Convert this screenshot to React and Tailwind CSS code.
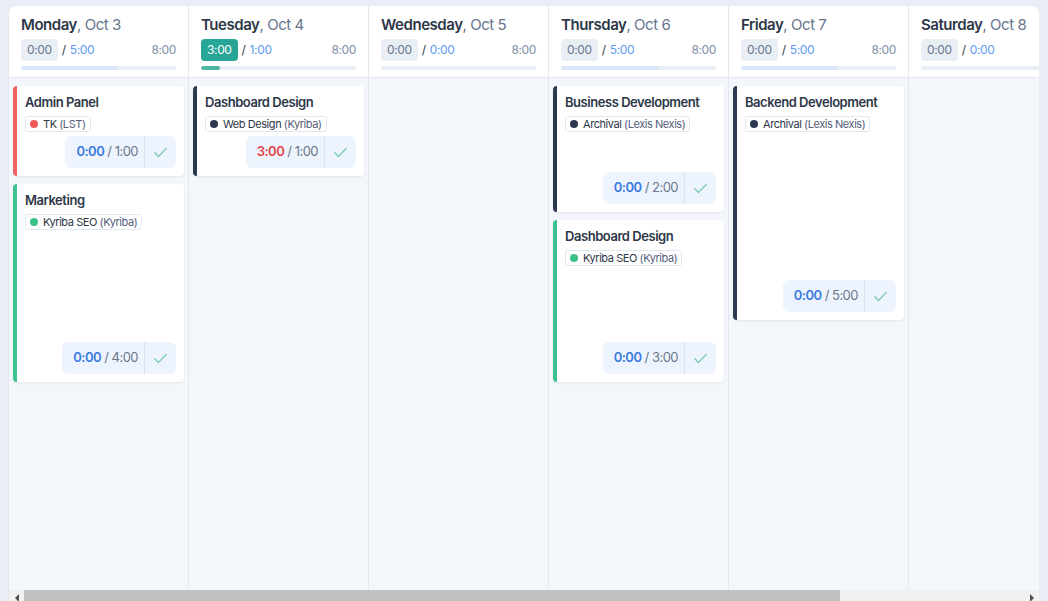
import React from "react";

const days = [
  { name: "Monday", date: "Oct 3", logged: "0:00", planned: "5:00", pct: 62.5, active: false,
    cards: [
      { title: "Admin Panel", tag: "TK", client: "LST", dot: "bg-[#ef5b5b]", border: "border-[#ef6262]", h: "h-[90px]", spent: "0:00", est: "1:00", over: false },
      { title: "Marketing", tag: "Kyriba SEO", client: "Kyriba", dot: "bg-[#3cc08a]", border: "border-[#3cc38f]", h: "h-[198px]", spent: "0:00", est: "4:00", over: false },
    ] },
  { name: "Tuesday", date: "Oct 4", logged: "3:00", planned: "1:00", pct: 12.5, active: true,
    cards: [
      { title: "Dashboard Design", tag: "Web Design", client: "Kyriba", dot: "bg-[#2c3a50]", border: "border-[#2c3a50]", h: "h-[90px]", spent: "3:00", est: "1:00", over: true },
    ] },
  { name: "Wednesday", date: "Oct 5", logged: "0:00", planned: "0:00", pct: 0, active: false, cards: [] },
  { name: "Thursday", date: "Oct 6", logged: "0:00", planned: "5:00", pct: 62.5, active: false,
    cards: [
      { title: "Business Development", tag: "Archival", client: "Lexis Nexis", dot: "bg-[#2c3a50]", border: "border-[#2c3a50]", h: "h-[126px]", spent: "0:00", est: "2:00", over: false },
      { title: "Dashboard Design", tag: "Kyriba SEO", client: "Kyriba", dot: "bg-[#3cc08a]", border: "border-[#3cc38f]", h: "h-[162px]", spent: "0:00", est: "3:00", over: false },
    ] },
  { name: "Friday", date: "Oct 7", logged: "0:00", planned: "5:00", pct: 62.5, active: false,
    cards: [
      { title: "Backend Development", tag: "Archival", client: "Lexis Nexis", dot: "bg-[#2c3a50]", border: "border-[#2c3a50]", h: "h-[234px]", spent: "0:00", est: "5:00", over: false },
    ] },
  { name: "Saturday", date: "Oct 8", logged: "0:00", planned: "0:00", pct: 0, active: false, cards: [] },
  { name: "Sunday", date: "Oct 9", logged: "0:00", planned: "0:00", pct: 0, active: false, cards: [] },
];

function Check() {
  return (
    <svg width="17" height="17" viewBox="0 0 24 24" fill="none" stroke="#7ccbb8" strokeWidth="2" strokeLinecap="round" strokeLinejoin="round">
      <path d="M4 12.5l5 5L20 6.5" />
    </svg>
  );
}

function Card({ c }) {
  return (
    <div className={`${c.h} bg-white rounded-[4px] border-l-4 ${c.border} shadow-[0_1px_2px_rgba(30,45,70,0.08)] flex flex-col pl-2 pr-2 pt-2 pb-2`}>
      <div className="text-[13px] leading-4 font-semibold tracking-[-0.035em] text-[#2d3748] whitespace-nowrap">{c.title}</div>
      <div className="mt-[6px] flex">
        <div className="h-4 flex items-center gap-[5px] border border-[#e2e8f0] rounded-[3px] px-[4px] text-[11px] tracking-[-0.04em] leading-none text-[#2d3748] whitespace-nowrap">
          <span className="w-[8px] h-[8px] rounded-full shrink-0 flex">
            <span className={`w-full h-full rounded-full ${c.dot}`}></span>
          </span>
          <span>{c.tag} <span className="text-[#55607a]">({c.client})</span></span>
        </div>
      </div>
      <div className="mt-auto flex justify-end">
        <div className="h-8 flex items-center bg-[#eef4fd] rounded-md">
          <div className="pl-[11px] pr-[6px] text-[13px] tracking-[-0.04em] whitespace-nowrap">
            <span className={`font-semibold ${c.over ? "text-[#e0464c]" : "text-[#3b7be0]"}`}>{c.spent}</span>
            <span className="text-[#6b778c]"> / {c.est}</span>
          </div>
          <div className="w-px self-stretch bg-[#d3e2f7]"></div>
          <div className="w-[31px] flex items-center justify-center">
            <Check />
          </div>
        </div>
      </div>
    </div>
  );
}

function Column({ d }) {
  return (
    <div className="w-[180px] shrink-0 flex flex-col border-r border-[#e3e8f0]">
      <div className="bg-white px-3 pt-[9px] pb-[7px] border-b border-[#e3e8f0]">
        <div className="text-[15px] leading-5 tracking-[-0.03em] whitespace-nowrap text-[#2d3748]">
          <span className="font-semibold">{d.name}</span>
          <span className="text-[#66758c]">, {d.date}</span>
        </div>
        <div className="mt-1 h-[22px] flex items-center justify-between text-[12px] tracking-[-0.03em]">
          <div className="flex items-center">
            <span className={`h-[22px] px-[6px] rounded-[4px] flex items-center ${d.active ? "bg-[#27a596] text-white" : "bg-[#e9eef5] text-[#66758c]"}`}>{d.logged}</span>
            <span className="ml-[4px] text-[#2d3748]">/</span>
            <span className="ml-[4px] text-[#5c9bf0]">{d.planned}</span>
          </div>
          <span className="text-[#8090a6]">8:00</span>
        </div>
        <div className="mt-[5px] h-1 rounded-full bg-[#e9eef5] overflow-hidden">
          <div className={`h-full rounded-full ${d.active ? "bg-[#4cb6a2]" : "bg-[#dae7fa]"}`} style={{ width: `${d.pct}%` }}></div>
        </div>
      </div>
      <div className="flex-1 bg-[#f3f6fb] p-1 pt-2 flex flex-col gap-2">
        {d.cards.map((c, i) => <Card key={i} c={c} />)}
      </div>
    </div>
  );
}

function ScrollBar() {
  return (
    <div className="h-[15px] shrink-0 flex bg-[#f1f1f1]">
      <div className="w-[15px] flex items-center justify-center">
        <div className="w-0 h-0 border-y-[4px] border-y-transparent border-r-[4px] border-r-[#505050]"></div>
      </div>
      <div className="flex-1 flex">
        <div className="w-[816px] h-full bg-[#c1c1c1]"></div>
      </div>
      <div className="w-[15px] flex items-center justify-center">
        <div className="w-0 h-0 border-y-[4px] border-y-transparent border-l-[4px] border-l-[#505050]"></div>
      </div>
    </div>
  );
}

export default function App() {
  return (
    <div className="w-[1048px] h-[601px] overflow-hidden bg-[#e9eef6] pt-[6px] pl-2 pr-[9px]" style={{ fontFamily: "Inter, 'Noto Sans', sans-serif" }}>
      <div className="w-[1031px] h-[599px] bg-white rounded-t-lg border-l border-[#e3e8f0] overflow-hidden flex flex-col">
        <div className="flex-1 min-h-0 overflow-hidden">
          <div className="flex w-max h-full">
            {days.map((d) => <Column key={d.name} d={d} />)}
          </div>
        </div>
        <ScrollBar />
      </div>
    </div>
  );
}
